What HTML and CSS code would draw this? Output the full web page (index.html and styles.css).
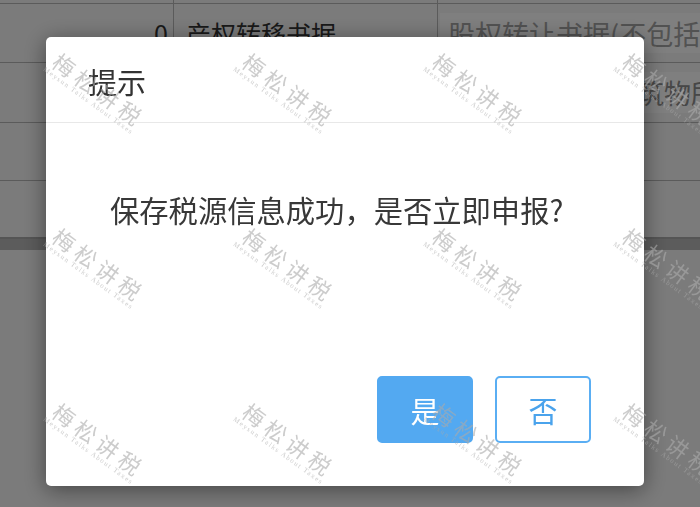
FILE: index.html
```html
<!DOCTYPE html>
<html lang="zh-CN">
<head>
<meta charset="utf-8">
<title>提示</title>
<link rel="stylesheet" href="styles.css">
</head>
<body>
<div class="page">
  <div class="table">
    <div class="row row-cut">
      <div class="cell c1"></div>
      <div class="cell c2"></div>
      <div class="cell c3"></div>
    </div>
    <div class="row row-a">
      <div class="cell c1 num">0</div>
      <div class="cell c2">产权转移书据</div>
      <div class="cell c3"><div class="field">股权转让书据(不包括应缴纳证券交易印花税的)</div></div>
    </div>
    <div class="row row-b">
      <div class="cell c1 num">0</div>
      <div class="cell c2">产权转移书据</div>
      <div class="cell c3"><div class="field">建筑物和其他构筑物所有权转让书据</div></div>
    </div>
    <div class="row row-c">
      <div class="cell c1"></div>
      <div class="cell c2"></div>
      <div class="cell c3"></div>
    </div>
  </div>
  <div class="scrollbar"></div>
</div>

<div class="mask"></div>

<div class="modal">
  <div class="modal-header">提示</div>
  <div class="modal-body">保存税源信息成功，是否立即申报?</div>
  <div class="modal-footer">
    <button class="btn btn-primary">是</button>
    <button class="btn btn-outline">否</button>
  </div>
</div>

<div class="watermarks">
  <div class="wm"><span class="wm-cn">梅松讲税</span><span class="wm-en">Meysun Talks About Taxes</span></div>
  <div class="wm"><span class="wm-cn">梅松讲税</span><span class="wm-en">Meysun Talks About Taxes</span></div>
  <div class="wm"><span class="wm-cn">梅松讲税</span><span class="wm-en">Meysun Talks About Taxes</span></div>
  <div class="wm"><span class="wm-cn">梅松讲税</span><span class="wm-en">Meysun Talks About Taxes</span></div>
  <div class="wm"><span class="wm-cn">梅松讲税</span><span class="wm-en">Meysun Talks About Taxes</span></div>
  <div class="wm"><span class="wm-cn">梅松讲税</span><span class="wm-en">Meysun Talks About Taxes</span></div>
  <div class="wm"><span class="wm-cn">梅松讲税</span><span class="wm-en">Meysun Talks About Taxes</span></div>
  <div class="wm"><span class="wm-cn">梅松讲税</span><span class="wm-en">Meysun Talks About Taxes</span></div>
  <div class="wm"><span class="wm-cn">梅松讲税</span><span class="wm-en">Meysun Talks About Taxes</span></div>
  <div class="wm"><span class="wm-cn">梅松讲税</span><span class="wm-en">Meysun Talks About Taxes</span></div>
  <div class="wm"><span class="wm-cn">梅松讲税</span><span class="wm-en">Meysun Talks About Taxes</span></div>
  <div class="wm"><span class="wm-cn">梅松讲税</span><span class="wm-en">Meysun Talks About Taxes</span></div>
</div>
</body>
</html>
```

FILE: styles.css
```css
* {
  box-sizing: border-box;
}

html, body {
  margin: 0;
  padding: 0;
}

body {
  width: 700px;
  height: 507px;
  overflow: hidden;
  font-family: "Noto Sans CJK SC", "Noto Sans", sans-serif;
  color: #333;
  background: #f7f7f7;
}

.page {
  width: 700px;
  height: 507px;
  overflow: hidden;
  background: #f7f7f7;
}

.table {
  margin-top: -54px;
  display: flex;
  flex-direction: column;
}

.row {
  display: grid;
  grid-template-columns: 174px 264px 1fr;
  border-bottom: 1px solid #b6b6b6;
  white-space: nowrap;
  overflow: hidden;
}

.row-cut { height: 58px; }
.row-a { height: 59px; }
.row-b { height: 60px; }
.row-c { height: 58px; }

.cell {
  display: flex;
  align-items: center;
  overflow: hidden;
}

.c1, .c2 {
  border-right: 1px solid #b6b6b6;
}

.c1 {
  justify-content: flex-end;
  padding-right: 5px;
  font-size: 25px;
  color: #333;
}

.c2 {
  padding-left: 12px;
  font-size: 25px;
  color: #333;
}

.c3 {
  padding: 9px 0 9px 2px;
  align-items: stretch;
}

.field {
  flex: 1;
  display: flex;
  align-items: center;
  padding-left: 8px;
  background: #ffffff;
  font-size: 27px;
  color: #a4a4a4;
  white-space: nowrap;
  overflow: hidden;
}

.row-b .field {
  color: #8e8e8e;
}

.scrollbar {
  margin-top: 56px;
  height: 13px;
  background: #b8b8b8;
  border-top: 2px solid #aaaaaa;
}

.mask {
  position: fixed;
  inset: 0;
  background: rgba(0, 0, 0, 0.5);
}

.modal {
  position: fixed;
  left: 46px;
  top: 37px;
  width: 598px;
  height: 449px;
  background: #fff;
  border-radius: 5px;
  box-shadow: 0 4px 22px rgba(0, 0, 0, 0.45);
  display: flex;
  flex-direction: column;
}

.modal-header {
  height: 86px;
  border-bottom: 1px solid #e8e8e8;
  display: flex;
  align-items: center;
  padding: 3px 0 0 42px;
  font-size: 29px;
  color: #333;
}

.modal-body {
  margin-top: 66px;
  padding-left: 64px;
  font-size: 29.3px;
  line-height: 40px;
  color: #383838;
  white-space: nowrap;
}

.modal-footer {
  margin-top: auto;
  display: flex;
  justify-content: flex-end;
  gap: 22px;
  padding: 0 53px 43px 0;
}

.btn {
  width: 96px;
  height: 67px;
  border-radius: 5px;
  font-family: "Noto Sans CJK SC", "Noto Sans", sans-serif;
  font-size: 29px;
  display: flex;
  align-items: center;
  justify-content: center;
  padding: 0;
  cursor: pointer;
}

.btn-primary {
  background: #53a9f1;
  border: 2px solid #53a9f1;
  color: #fff;
}

.btn-outline {
  background: #fff;
  border: 2px solid #5aaef3;
  color: #4aa3ec;
}

.watermarks {
  position: fixed;
  inset: 0;
  pointer-events: none;
  display: grid;
  grid-template-columns: repeat(4, 190px);
  grid-template-rows: repeat(3, 175px);
  padding-top: 4px;
  overflow: hidden;
}

.wm {
  place-self: center;
  display: flex;
  flex-direction: column;
  align-items: center;
  transform: rotate(36deg);
  color: rgba(170, 170, 170, 0.6);
  white-space: nowrap;
}

.wm-cn {
  font-size: 22px;
  line-height: 22px;
  letter-spacing: 5px;
  margin-right: -5px;
}

.wm-en {
  font-family: "Liberation Serif", serif;
  font-size: 7px;
  line-height: 10px;
  letter-spacing: 1.4px;
}
```
